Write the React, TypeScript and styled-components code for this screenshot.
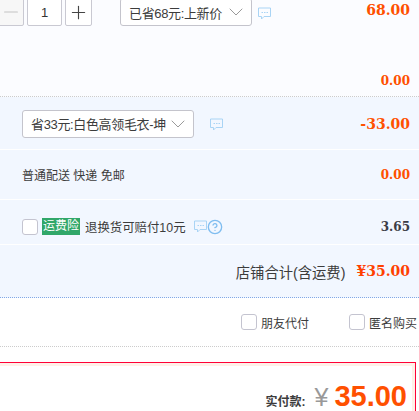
import styled, { createGlobalStyle } from 'styled-components'
import { ChevronDown, HelpCircle, Minus, Plus } from 'lucide-react'

const GlobalStyle = createGlobalStyle`
    html, body {
        margin: 0;
        padding: 0;
        background: #fff;
        overflow: hidden;
    }
    body {
        font-family: "Liberation Sans", "Noto Sans CJK SC", sans-serif;
        font-size: 12px;
        color: #3c3c3c;
    }
`

const Page = styled.div`
    width: 419px;
    height: 411px;
    overflow: hidden;
`

const ItemPanel = styled.section`
    height: 99px;
    margin-top: -2px;
    box-sizing: border-box;
    background: #fbfcff;
    border-bottom: 1px dotted #ccc;
`

const ItemRow = styled.div`
    display: flex;
    align-items: flex-start;
`

const Stepper = styled.div`
    display: flex;
    gap: 3px;
    width: 123px;
    margin-left: -3px;
`

const StepButton = styled.div<{ $muted?: boolean }>`
    display: flex;
    align-items: center;
    justify-content: center;
    width: 27px;
    height: 28px;
    box-sizing: border-box;
    border: 1px solid #c9c9d2;
    border-radius: 2px;
    background: ${p => (p.$muted ? '#f7f7f7' : '#fff')};
    color: ${p => (p.$muted ? '#c4c4c4' : '#444')};
`

const Count = styled(StepButton)`
    width: 35px;
    font-size: 13px;
    color: #333;
`

const Select = styled.div<{ $width: number }>`
    display: flex;
    align-items: center;
    justify-content: space-between;
    width: ${p => p.$width}px;
    height: 28px;
    padding: 0 3px 0 8px;
    box-sizing: border-box;
    background: #fff;
    border: 1px solid #c4c4cc;
    border-radius: 3px;
    font-size: 13px;
    letter-spacing: -0.35px;
    white-space: nowrap;
    color: #3c3c3c;

    svg {
        flex: none;
        color: #9a9a9a;
    }
`

const Note = styled.svg<{ $gap: number }>`
    flex: none;
    width: 13px;
    height: 13px;
    margin-left: ${p => p.$gap}px;
`

const TopNote = styled(Note)`
    margin-top: 9px;
`

const RowNote = styled(Note)`
    margin-top: 2px;
`

const Price = styled.div<{ $size?: number; $dark?: boolean }>`
    margin-left: auto;
    padding-right: 9px;
    font-family: "DejaVu Serif", serif;
    font-weight: 700;
    font-size: ${p => p.$size ?? 12}px;
    color: ${p => (p.$dark ? '#3c3c46' : '#ff5000')};
`

const TopPrice = styled(Price)`
    line-height: 24px;
`

const ItemTotal = styled.div`
    margin-top: 48px;
    text-align: right;
`

const Options = styled.section`
    background: #f2f7ff;
    border-bottom: 1px dotted #82a8e6;
`

const Row = styled.div<{ $height: number; $top?: number }>`
    display: flex;
    align-items: center;
    height: ${p => p.$height}px;
    padding: ${p => p.$top ?? 0}px 0 0 22px;
    box-sizing: border-box;
    border-bottom: 1px solid #fff;
`

const TotalRow = styled(Row)`
    justify-content: flex-end;
    border-bottom: 0;
    font-size: 14.3px;
    gap: 11px;
`

const TotalPrice = styled(Price)`
    margin-left: 0;
    color: #ff4000;
`

const Box = styled.span`
    display: block;
    flex: none;
    width: 16px;
    height: 16px;
    box-sizing: border-box;
    background: #fff;
    border: 1px solid #c4c4d0;
    border-radius: 3px;
`

const InsuranceTag = styled.span`
    margin: 0 5px 0 4px;
    padding: 0 1px;
    line-height: 17px;
    background: #31a769;
    color: #fff;
`

const InsuranceText = styled.span`
    font-size: 12.4px;
    white-space: nowrap;
`

const HelpIcon = styled(HelpCircle)`
    color: #7fbdf0;
    flex: none;
`

const Extras = styled.section`
    display: flex;
    justify-content: flex-end;
    align-items: center;
    gap: 40px;
    height: 49px;
    box-sizing: border-box;
    padding-right: 2px;
    border-bottom: 1px dotted #ccc;
`

const Extra = styled.label`
    display: flex;
    align-items: center;
    gap: 4px;
    white-space: nowrap;
`

const PayBox = styled.section`
    display: flex;
    align-items: flex-start;
    justify-content: flex-end;
    gap: 9px;
    height: 60px;
    margin-top: 15px;
    margin-right: 3px;
    padding: 15px 8px 0 0;
    box-sizing: border-box;
    border-top: 1px solid #ff0036;
    border-right: 1px solid #ff0036;
    box-shadow: inset -3px 3px 0 #fff0e8;
`

const PayLabel = styled.span`
    margin-top: 14px;
    font-weight: 700;
    font-size: 12px;
`

const PayAmount = styled.span`
    display: flex;
    align-items: baseline;
    gap: 6px;
    line-height: 36px;
`

const Yen = styled.span`
    font-family: "Liberation Sans", sans-serif;
    font-size: 25px;
    color: #999;
`

const Amount = styled.span`
    font-family: "Liberation Sans", sans-serif;
    font-weight: 700;
    font-size: 29px;
    color: #ff5000;
`

const notePaths = (
    <>
        <path d="M.5 1h12v8.5H6L3.5 12V9.5h-3z" />
        <path d="M3.5 5.5H5M6 5.5h1.5M8.5 5.5H10" />
    </>
)

export default function App() {
    return (
        <Page>
            <GlobalStyle />
            <ItemPanel>
                <ItemRow>
                    <Stepper>
                        <StepButton $muted><Minus size={22} strokeWidth={1.2} /></StepButton>
                        <Count>1</Count>
                        <StepButton><Plus size={21} strokeWidth={1.3} /></StepButton>
                    </Stepper>
                    <Select $width={132}>
                        已省68元:上新价
                        <ChevronDown size={24} strokeWidth={1} />
                    </Select>
                    <TopNote $gap={6} viewBox="0 0 13 13" fill="none" stroke="#a9d4f5">{notePaths}</TopNote>
                    <TopPrice $size={14}>68.00</TopPrice>
                </ItemRow>
                <ItemTotal>
                    <Price>0.00</Price>
                </ItemTotal>
            </ItemPanel>
            <Options>
                <Row $height={53} $top={1}>
                    <Select $width={172}>
                        省33元:白色高领毛衣-坤
                        <ChevronDown size={24} strokeWidth={1} />
                    </Select>
                    <RowNote $gap={16} viewBox="0 0 13 13" fill="none" stroke="#a9d4f5">{notePaths}</RowNote>
                    <Price $size={14}>-33.00</Price>
                </Row>
                <Row $height={50}>
                    普通配送 快递 免邮
                    <Price>0.00</Price>
                </Row>
                <Row $height={45} $top={9}>
                    <Box />
                    <InsuranceTag>运费险</InsuranceTag>
                    <InsuranceText>退换货可赔付10元</InsuranceText>
                    <Note $gap={8} viewBox="0 0 13 13" fill="none" stroke="#a9d4f5">{notePaths}</Note>
                    <HelpIcon size={16} />
                    <Price $dark>3.65</Price>
                </Row>
                <TotalRow $height={52}>
                    店铺合计(含运费)
                    <TotalPrice $size={14}>¥35.00</TotalPrice>
                </TotalRow>
            </Options>
            <Extras>
                <Extra><Box />朋友代付</Extra>
                <Extra><Box />匿名购买</Extra>
            </Extras>
            <PayBox>
                <PayLabel>实付款:</PayLabel>
                <PayAmount>
                    <Yen>¥</Yen>
                    <Amount>35.00</Amount>
                </PayAmount>
            </PayBox>
        </Page>
    )
}
